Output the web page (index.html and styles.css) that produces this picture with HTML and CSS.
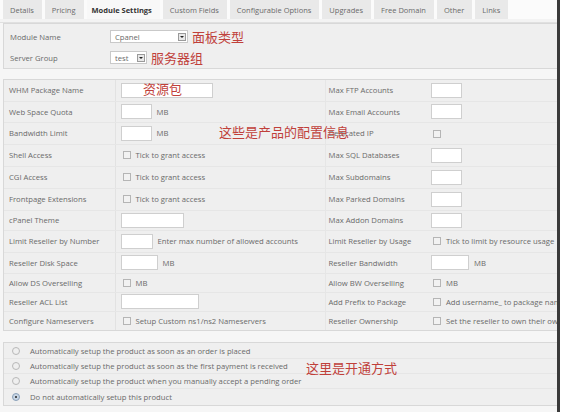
FILE: index.html
```html
<!DOCTYPE html>
<html>
<head>
<meta charset="utf-8">
<link rel="stylesheet" href="styles.css">
</head>
<body>
<div class="frame">
  <div class="tabs">
    <span class="tab">Details</span>
    <span class="tab">Pricing</span>
    <span class="tab active">Module Settings</span>
    <span class="tab">Custom Fields</span>
    <span class="tab">Configurable Options</span>
    <span class="tab">Upgrades</span>
    <span class="tab">Free Domain</span>
    <span class="tab">Other</span>
    <span class="tab">Links</span>
  </div>
  <div class="tabline"></div>

  <div class="box box1">
    <div class="row1">
      <span class="lab1">Module Name</span>
      <span class="select wide"><span class="val">Cpanel</span><span class="arrow"></span></span>
      <span class="note">面板类型</span>
    </div>
    <div class="row1">
      <span class="lab1">Server Group</span>
      <span class="select narrow"><span class="val">test</span><span class="arrow"></span></span>
      <span class="note">服务器组</span>
    </div>
  </div>

  <div class="box box2">
    <table class="grid">
      <tr class="r21">
        <td class="l">WHM Package Name</td>
        <td class="v"><span class="inp w92"></span><span class="note overlay-pkg">资源包</span></td>
        <td class="l2">Max FTP Accounts</td>
        <td class="v2"><span class="inp w31"></span></td>
      </tr>
      <tr class="r21">
        <td class="l">Web Space Quota</td>
        <td class="v"><span class="inp w31"></span><span class="after">MB</span></td>
        <td class="l2">Max Email Accounts</td>
        <td class="v2"><span class="inp w31"></span></td>
      </tr>
      <tr>
        <td class="l">Bandwidth Limit</td>
        <td class="v"><span class="inp w31"></span><span class="after">MB</span></td>
        <td class="l2">Dedicated IP</td>
        <td class="v2"><span class="cb"></span></td>
      </tr>
      <tr>
        <td class="l">Shell Access</td>
        <td class="v"><span class="cb"></span><span class="cbt">Tick to grant access</span></td>
        <td class="l2">Max SQL Databases</td>
        <td class="v2"><span class="inp w31"></span></td>
      </tr>
      <tr>
        <td class="l">CGI Access</td>
        <td class="v"><span class="cb"></span><span class="cbt">Tick to grant access</span></td>
        <td class="l2">Max Subdomains</td>
        <td class="v2"><span class="inp w31"></span></td>
      </tr>
      <tr>
        <td class="l">Frontpage Extensions</td>
        <td class="v"><span class="cb"></span><span class="cbt">Tick to grant access</span></td>
        <td class="l2">Max Parked Domains</td>
        <td class="v2"><span class="inp w31"></span></td>
      </tr>
      <tr class="r20">
        <td class="l">cPanel Theme</td>
        <td class="v"><span class="inp w63"></span></td>
        <td class="l2">Max Addon Domains</td>
        <td class="v2"><span class="inp w31"></span></td>
      </tr>
      <tr>
        <td class="l">Limit Reseller by Number</td>
        <td class="v"><span class="inp w32"></span><span class="after">Enter max number of allowed accounts</span></td>
        <td class="l2">Limit Reseller by Usage</td>
        <td class="v2"><span class="cb"></span><span class="cbt">Tick to limit by resource usage</span></td>
      </tr>
      <tr class="r21">
        <td class="l">Reseller Disk Space</td>
        <td class="v"><span class="inp w37"></span><span class="after">MB</span></td>
        <td class="l2">Reseller Bandwidth</td>
        <td class="v2"><span class="inp w38"></span><span class="after">MB</span></td>
      </tr>
      <tr class="r19">
        <td class="l">Allow DS Overselling</td>
        <td class="v"><span class="cb"></span><span class="cbt">MB</span></td>
        <td class="l2">Allow BW Overselling</td>
        <td class="v2"><span class="cb"></span><span class="cbt">MB</span></td>
      </tr>
      <tr class="r19">
        <td class="l">Reseller ACL List</td>
        <td class="v"><span class="inp w78"></span></td>
        <td class="l2">Add Prefix to Package</td>
        <td class="v2"><span class="cb"></span><span class="cbt">Add username_ to package name</span></td>
      </tr>
      <tr class="r19">
        <td class="l">Configure Nameservers</td>
        <td class="v"><span class="cb"></span><span class="cbt">Setup Custom ns1/ns2 Nameservers</span></td>
        <td class="l2">Reseller Ownership</td>
        <td class="v2"><span class="cb"></span><span class="cbt">Set the reseller to own their own account</span></td>
      </tr>
    </table>
    <span class="note overlay-cfg">这些是产品的配置信息</span>
  </div>

  <div class="box box3">
    <div class="radio-row"><span class="radio"></span>Automatically setup the product as soon as an order is placed</div>
    <div class="radio-row"><span class="radio"></span>Automatically setup the product as soon as the first payment is received</div>
    <div class="radio-row"><span class="radio"></span>Automatically setup the product when you manually accept a pending order</div>
    <div class="radio-row"><span class="radio on"></span>Do not automatically setup this product</div>
    <span class="note overlay-open">这里是开通方式</span>
  </div>
</div>
</body>
</html>
```
FILE: styles.css
```css
html, body {
  margin: 0;
  padding: 0;
  background: #ffffff;
}
body {
  font-family: "Open Sans", "DejaVu Sans", sans-serif;
  font-size: 7.7px;
  color: #6a6a6a;
  width: 563px;
  height: 412px;
  overflow: hidden;
}
.frame {
  width: 560px;
  height: 412px;
  background: #f6f6f6;
  border-right: 3px solid #3a3a3a;
  box-sizing: border-box;
  overflow: hidden;
  position: relative;
}
.tabs {
  display: flex;
  gap: 3px;
  padding-left: 3px;
  height: 19px;
  background: #fbfbfb;
  font-size: 7.5px;
}
.tab {
  display: flex;
  align-items: center;
  padding: 0 8px 0 7px;
  background: #e9e9e9;
  color: #6a6a6a;
  height: 19px;
}
.tab.active {
  background: #f8f8f8;
  font-weight: bold;
  color: #333;
  padding-left: 5px;
}
.tabline {
  height: 3px;
  border-bottom: 1px solid #e0e0e0;
  background: #f3f3f3;
}
.box {
  margin-left: 3px;
  background: #efefef;
  border: 1px solid #d8d8d8;
  border-right: none;
  position: relative;
}
.box1 {
  padding: 2px 0 0;
}
.row1 {
  height: 21px;
  display: flex;
  align-items: center;
}
.lab1 {
  width: 106px;
  padding-left: 6px;
  box-sizing: border-box;
}
.select {
  display: inline-flex;
  align-items: center;
  justify-content: space-between;
  height: 13px;
  background: #fff;
  border: 1px solid #c9c9c9;
  box-sizing: border-box;
  padding: 0 1px 0 4px;
}
.select.wide { width: 78px; }
.select.narrow { width: 37px; }
.arrow {
  width: 8px;
  height: 8px;
  border: 1px solid #9a9a9a;
  background: #e8e8e8;
  box-sizing: border-box;
  position: relative;
}
.arrow::after {
  content: "";
  position: absolute;
  left: 1px;
  top: 2px;
  border-left: 2px solid transparent;
  border-right: 2px solid transparent;
  border-top: 2px solid #222;
}
.note {
  font-family: "Noto Sans CJK SC", sans-serif;
  font-size: 13px;
  color: #c0403a;
  margin-left: 4px;
  line-height: 1;
}
.box2 {
  margin-top: 10px;
}
.grid {
  border-collapse: collapse;
  width: 100%;
  table-layout: fixed;
}
.grid tr {
  height: 22px;
}
.grid tr.r20 { height: 20px; }
.grid tr.r21 { height: 21px; }
.grid tr.r19 { height: 19px; }
.grid td {
  padding: 0;
  border-bottom: 1px solid #e6e6e6;
  vertical-align: middle;
  white-space: nowrap;
  overflow: hidden;
}
.grid tr:last-child td { border-bottom: none; }
.grid td.l {
  width: 111px;
  padding-left: 5px;
  box-sizing: border-box;
  border-right: 1px solid #e2e2e2;
}
.grid td.v {
  width: 210px;
  padding-left: 5px;
  box-sizing: border-box;
}
.grid td.l2 {
  width: 103px;
  padding-left: 3px;
  box-sizing: border-box;
  border-left: 1px solid #e6e6e6;
}
.grid td.v2 {
  padding-left: 3px;
}
.inp {
  display: inline-block;
  vertical-align: middle;
  height: 15px;
  background: #fff;
  border: 1px solid #cfcfcf;
  box-sizing: border-box;
}
.w31 { width: 31px; }
.w32 { width: 32px; }
.w37 { width: 37px; }
.w38 { width: 38px; }
.w63 { width: 63px; }
.w78 { width: 78px; }
.w92 { width: 92px; }
.after {
  margin-left: 5px;
  vertical-align: middle;
}
.cb {
  display: inline-block;
  vertical-align: middle;
  width: 8px;
  height: 8px;
  border: 1px solid #b5b5b5;
  background: #f2f2f2;
  box-sizing: border-box;
  margin-left: 2px;
}
.cbt {
  margin-left: 5px;
  vertical-align: middle;
}
.overlay-pkg {
  position: absolute;
  left: 139px;
  top: 2px;
  margin: 0;
}
.overlay-cfg {
  position: absolute;
  left: 215px;
  top: 45px;
  margin: 0;
}
.box3 {
  margin-top: 11px;
  padding: 1px 0 1px;
}
.radio-row {
  height: 15px;
  display: flex;
  align-items: center;
  border-bottom: 1px solid #e6e6e6;
  box-sizing: border-box;
  padding-left: 8px;
  white-space: nowrap;
}
.radio-row:last-of-type { border-bottom: none; }
.radio {
  width: 8px;
  height: 8px;
  border-radius: 50%;
  border: 1px solid #b8b8b8;
  background: #efefef;
  box-sizing: border-box;
  margin-right: 10px;
  position: relative;
}
.radio.on {
  border-color: #8aa0b8;
  background: #c8d6e6;
}
.radio.on::after {
  content: "";
  position: absolute;
  left: 2px;
  top: 2px;
  width: 2px;
  height: 2px;
  border-radius: 50%;
  background: #222;
}
.overlay-open {
  position: absolute;
  left: 302px;
  top: 18px;
  margin: 0;
}
```
